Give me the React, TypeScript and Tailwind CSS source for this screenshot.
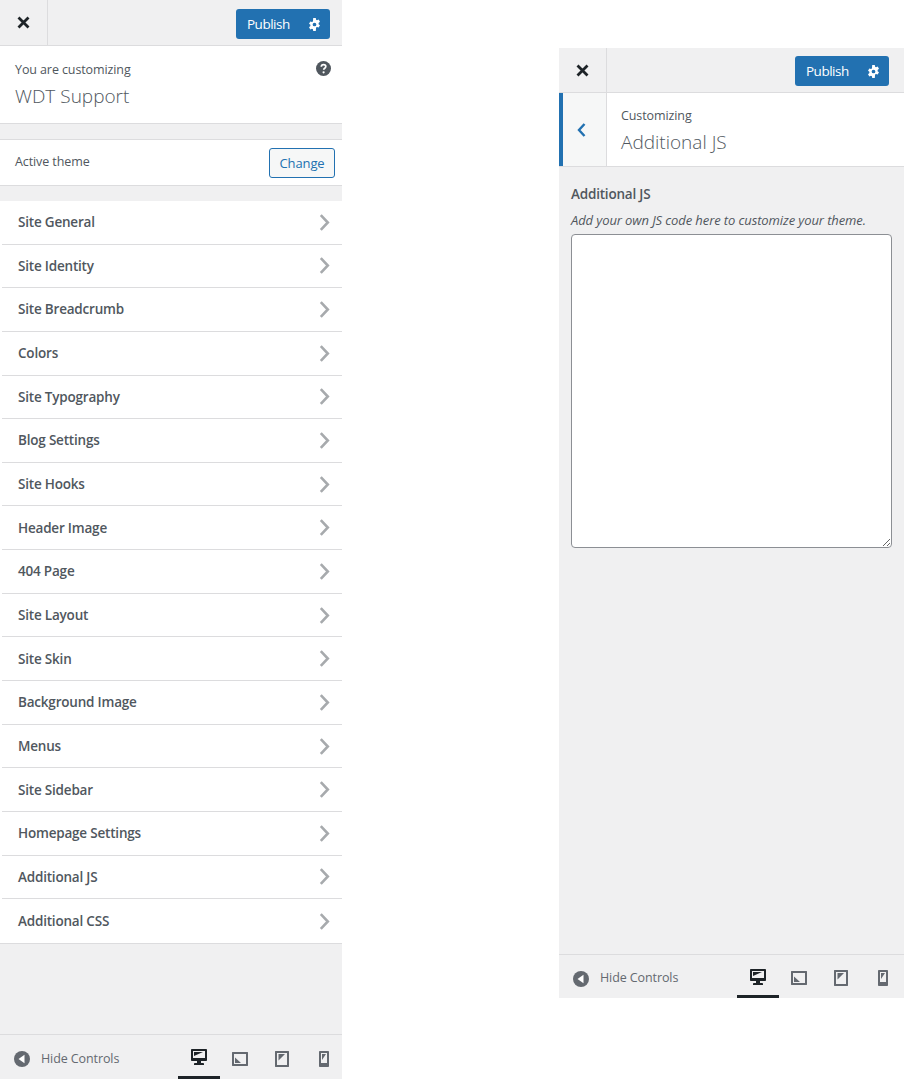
const font = { fontFamily: '"Open Sans", "Noto Sans", sans-serif' }

const sections = [
  'Site General',
  'Site Identity',
  'Site Breadcrumb',
  'Colors',
  'Site Typography',
  'Blog Settings',
  'Site Hooks',
  'Header Image',
  '404 Page',
  'Site Layout',
  'Site Skin',
  'Background Image',
  'Menus',
  'Site Sidebar',
  'Homepage Settings',
  'Additional JS',
  'Additional CSS',
]

function CloseIcon() {
  return (
    <svg width="13" height="13" viewBox="0 0 13 13" fill="none" stroke="#1d2327" strokeWidth="2.8">
      <path d="M1.5 1.5l10 10M11.5 1.5l-10 10" />
    </svg>
  )
}

function GearIcon() {
  return (
    <svg width="13" height="13" viewBox="0 0 14 14">
      <path
        fill="#fff"
        fillRule="evenodd"
        d="M5.6 0h2.8l.3 1.9c.4.1.7.3 1 .5l1.8-.7 1.4 2.4-1.5 1.2c.1.4.1.9 0 1.4l1.500 1.200-1.400 2.400-1.800-.7c-.3.2-.6.4-1 .5L8.400 14H5.600l-.3-1.900c-.4-.1-.7-.3-1-.5l-1.800.7L1.100 9.900l1.500-1.200c-.1-.5-.1-1 0-1.400L1.100 6.100l1.400-2.400 1.800.7c.3-.2.6-.4 1-.5L5.600 0zM7 5a2 2 0 100 4 2 2 0 000-4z"
      />
    </svg>
  )
}

function PublishButton() {
  return (
    <div className="flex h-[30px] w-[94px] items-center rounded-[3px] bg-[#2271b1] pl-[11px] pr-[9.500px] text-white">
      <span className="text-[13.500px] tracking-[-0.5px]">Publish</span>
      <span className="ml-auto flex">
        <GearIcon />
      </span>
    </div>
  )
}

function Chevron() {
  return (
    <svg width="11" height="17" viewBox="0 0 11 17" fill="none" stroke="#a7aaad" strokeWidth="2.6">
      <path d="M1.800 1.200L8.800 8.500l-7 7.300" />
    </svg>
  )
}

function DesktopIcon() {
  return (
    <svg width="20" height="20" viewBox="0 0 20 20">
      <path
        fill="#1d2327"
        d="M3 2h14c.55 0 1 .45 1 1v10c0 .55-.45 1-1 1h-5v2h2c.55 0 1 .45 1 1v1H5v-1c0-.55.45-1 1-1h2v-2H3c-.55 0-1-.45-1-1V3c0-.55.45-1 1-1zm13 9V4H4v7h12zM5 5h9L5 9V5z"
      />
    </svg>
  )
}

function TabletIcon() {
  return (
    <svg width="20" height="20" viewBox="0 0 20 20">
      <path fill="#646970" d="M2.500 3h15c.3 0 .5.200.5.500v13c0 .3-.2.500-.5.500h-15c-.3 0-.5-.2-.5-.5v-13c0-.3.200-.5.500-.5zM16 15V5H4v10h12zM5 15.000V8.500L11 14H5z" />
    </svg>
  )
}

function PortraitIcon() {
  return (
    <svg width="20" height="20" viewBox="0 0 20 20">
      <path fill="#646970" d="M3.500 2h13c.3 0 .5.200.5.500v15c0 .3-.2.500-.5.500h-13c-.3 0-.5-.2-.5-.5v-15c0-.3.200-.5.500-.5zM15 16V4H5v12h10zM6.500 5H13l-6.500 6.500V5z" />
    </svg>
  )
}

function PhoneIcon() {
  return (
    <svg width="20" height="20" viewBox="0 0 20 20">
      <path fill="#646970" d="M6 2h8c.550 0 1 .45 1 1v14c0 .55-.45 1-1 1H6c-.55 0-1-.45-1-1V3c0-.55.45-1 1-1zm7 12V4H7v10h6zM8 5h4L8 11V5z" />
    </svg>
  )
}

function Footer({ compact }: { compact?: boolean }) {
  return (
    <div
      className={`flex shrink-0 items-center overflow-hidden border-t border-[#dcdcde] bg-[#f0f0f1] ${
        compact ? 'h-[44px]' : 'h-[45px]'
      }`}
    >
      <div className="ml-[14px] mt-[4px] flex items-center">
        <svg width="16" height="16" viewBox="0 0 16 16">
          <circle cx="8" cy="8" r="8" fill="#646970" />
          <path fill="#fff" d="M10.500 3.800v8.400L4.500 8z" />
        </svg>
        <span className="ml-[11px] text-[12.500px] tracking-[-0.1px] text-[#646970]">Hide Controls</span>
      </div>
      <div className={`ml-auto flex h-full shrink-0 ${compact ? '-mr-px' : '-mr-[4px]'}`}>
        <div className="flex w-[42px] items-center justify-center border-b-[3px] border-[#1d2327] pt-[3px]">
          <DesktopIcon />
        </div>
        <div className="flex w-[42px] items-center justify-center pr-[2px] pt-[3px]">
          <TabletIcon />
        </div>
        <div className="flex w-[42px] items-center justify-center pr-[2px] pt-[3px]">
          <PortraitIcon />
        </div>
        <div className="flex w-[42px] items-center justify-center pr-[2px] pt-[3px]">
          <PhoneIcon />
        </div>
      </div>
    </div>
  )
}

function TopBar({ compact }: { compact?: boolean }) {
  return (
    <div
      className={`flex shrink-0 border-b border-[#dcdcde] bg-[#f0f0f1] ${
        compact ? 'h-[45px]' : 'h-[46px]'
      }`}
    >
      <div className="flex h-full w-[48px] items-center justify-center border-r border-[#dcdcde]">
        <CloseIcon />
      </div>
      <div className={`ml-auto ${compact ? 'mr-[15px] mt-[8px]' : 'mr-[12px] mt-[9px]'}`}>
        <PublishButton />
      </div>
    </div>
  )
}

function MainPanel() {
  return (
    <div className="flex h-[1079px] w-[342px] shrink-0 flex-col bg-[#f0f0f1]">
      <TopBar />
      <div className="relative h-[78px] border-b border-[#dcdcde] bg-white px-[15px] pt-[14px]">
        <div className="text-[12.500px] leading-[20px] tracking-[-0.1px] text-[#50575e]">You are customizing</div>
        <div className="mt-[3px] text-[19px] font-light leading-[26px] text-[#50575e]">WDT Support</div>
        <svg className="absolute right-[11px] top-[15px]" width="15" height="15" viewBox="0 0 15 15">
          <circle cx="7.500" cy="7.500" r="7.500" fill="#50575e" />
          <path d="M5.300 5.800c0-1.400 1-2.100 2.300-2.100s2.200.7 2.200 1.900c0 1.600-2.100 1.600-2.100 3.100" fill="none" stroke="#fff" strokeWidth="1.700" />
          <circle cx="7.600" cy="11.300" r="1.100" fill="#fff" />
        </svg>
      </div>
      <div className="mt-[15px] flex h-[47px] items-start justify-between border-y border-[#dcdcde] bg-white pl-[15px] pr-[7px] pt-[8px]">
        <span className="mt-[4px] text-[12.500px] leading-[20px] tracking-[-0.1px] text-[#50575e]">Active theme</span>
        <span className="flex h-[30px] w-[66px] items-center justify-center rounded-[3px] border border-[#2271b1] bg-[#f6f7f7] pt-[2px] text-[13px] tracking-[-0.1px] text-[#2271b1]">
          Change
        </span>
      </div>
      <div className="mt-[15px] border-b border-[#dcdcde] bg-white pl-[2px]">
        {sections.map((name, i) => (
          <div
            key={name}
            className={`flex h-[43.650px] items-center justify-between pl-[16px] pr-[12px] ${
              i < sections.length - 1 ? 'border-b border-[#dcdcde]' : ''
            }`}
          >
            <span className="text-[13.500px] font-semibold tracking-[-0.2px] text-[#50575e]">{name}</span>
            <Chevron />
          </div>
        ))}
      </div>
      <div className="flex-1" />
      <Footer />
    </div>
  )
}

function SectionPanel() {
  return (
    <div className="ml-[217px] mt-[48px] flex h-[950px] w-[345px] shrink-0 flex-col bg-[#f0f0f1]">
      <TopBar compact />
      <div className="flex h-[74px] shrink-0 border-b border-[#dcdcde] bg-white">
        <div className="flex w-[48px] items-center justify-center border-l-4 border-r border-l-[#2271b1] border-r-[#dcdcde] bg-[#f6f7f7] pr-[6px]">
          <svg width="9" height="14" viewBox="0 0 9 14" fill="none" stroke="#2271b1" strokeWidth="2.400">
            <path d="M7.500 1L2 7l5.500 6" />
          </svg>
        </div>
        <div className="pl-[14px] pt-[13px]">
          <div className="text-[12.500px] leading-[20px] tracking-[-0.1px] text-[#50575e]">Customizing</div>
          <div className="mt-[2px] text-[19px] font-light leading-[28px] text-[#50575e]">Additional JS</div>
        </div>
      </div>
      <div className="flex-1 pl-[12px] pr-[12px] pt-[17px]">
        <div className="text-[13.500px] font-semibold leading-[20px] tracking-[-0.2px] text-[#50575e]">Additional JS</div>
        <div className="mt-[6px] text-[13px] italic leading-[20px] tracking-[-0.1px] text-[#50575e]">
          Add your own JS code here to customize your theme.
        </div>
        <textarea className="mt-[4px] block h-[314px] w-[321px] rounded-[4px] border border-[#8c8f94] bg-white" />
      </div>
      <Footer compact />
    </div>
  )
}

export default function App() {
  return (
    <div className="flex min-h-[1079px] w-[904px] items-start overflow-hidden bg-white" style={font}>
      <MainPanel />
      <SectionPanel />
    </div>
  )
}
